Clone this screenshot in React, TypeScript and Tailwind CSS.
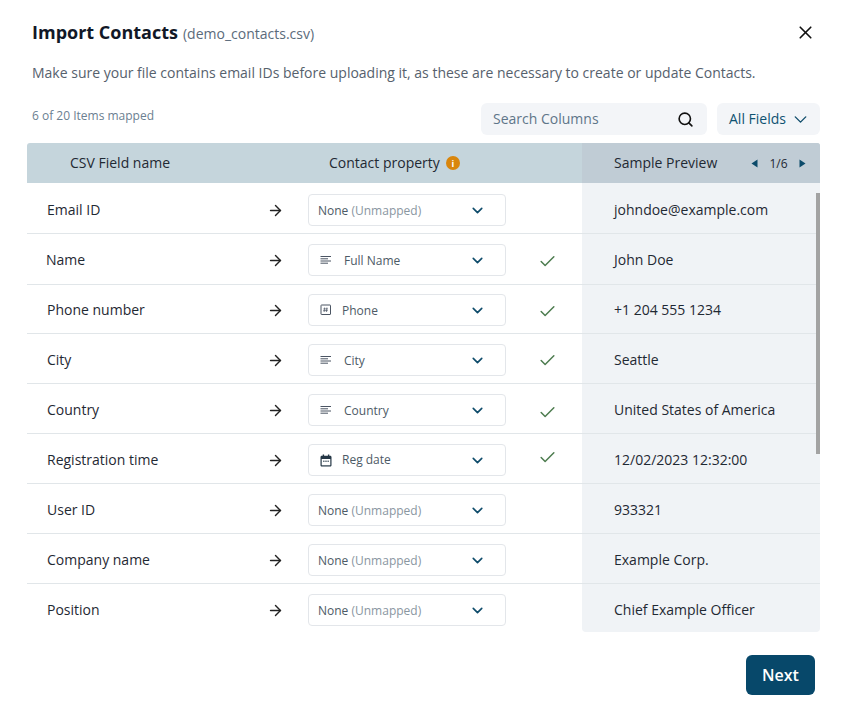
import React from "react";
import { ArrowRight, Check, ChevronDown, Search, X } from "lucide-react";

type Kind = "text" | "num" | "date" | null;
type Row = { name: string; prop: string | null; kind: Kind; sample: string; h: string; pt: string; nameClass?: string; checkClass?: string };

const rows: Row[] = [
  { name: "Email ID", prop: null, kind: null, sample: "johndoe@example.com", h: "h-[51px]", pt: "pt-[4px]" },
  { name: "Name", prop: "Full Name", kind: "text", sample: "John Doe", h: "h-[51px]", pt: "pt-[2px]", nameClass: "pl-[19px]", checkClass: "mt-[2px]" },
  { name: "Phone number", prop: "Phone", kind: "num", sample: "+1 204 555 1234", h: "h-[49px]", pt: "pt-[2px]", checkClass: "mt-[2px]" },
  { name: "City", prop: "City", kind: "text", sample: "Seattle", h: "h-[50px]", pt: "pt-[3px]" },
  { name: "Country", prop: "Country", kind: "text", sample: "United States of America", h: "h-[50px]", pt: "pt-[3px]", checkClass: "mt-[4px]" },
  { name: "Registration time", prop: "Reg date", kind: "date", sample: "12/02/2023 12:32:00", h: "h-[50px]", pt: "pt-[3px]", checkClass: "mt-[-5px]" },
  { name: "User ID", prop: null, kind: null, sample: "933321", h: "h-[50px]", pt: "pt-[3px]" },
  { name: "Company name", prop: null, kind: null, sample: "Example Corp.", h: "h-[50px]", pt: "pt-[3px]" },
  { name: "Position", prop: null, kind: null, sample: "Chief Example Officer", h: "h-[48px]", pt: "pt-[4px]" },
];

function TextIcon() {
  return (
    <svg width="12" height="12" viewBox="0 0 12 12" className="ml-[2px] mr-[12px] shrink-0" fill="none" stroke="#4b5563" strokeWidth="1">
      <path d="M0.5 2.5h10.5M0.5 4.8h7.5M0.5 7h10.5M0.5 9.2h7.5" />
    </svg>
  );
}

function NumIcon() {
  return (
    <svg width="12" height="12" viewBox="0 0 12 12" className="ml-[2px] mr-[10px] shrink-0" fill="none" stroke="#4b5563">
      <rect x="1" y="1" width="9.5" height="9.5" rx="0.5" strokeWidth="1" />
      <path d="M4.6 3.5 4.1 8M6.9 3.5 6.4 8M3.4 4.9h4.6M3.2 6.6h4.6" strokeWidth="0.7" />
    </svg>
  );
}

function DateIcon() {
  return (
    <svg width="12" height="13" viewBox="0 0 12 13" className="ml-[2px] mr-[10px] shrink-0">
      <path d="M2.7 0.5h1.4v1.2h3.8V0.5h1.4v1.2h0.9c.7 0 1.3.6 1.3 1.3v8.2c0 .7-.6 1.3-1.3 1.3H1.8c-.7 0-1.3-.6-1.3-1.3V3c0-.7.6-1.3 1.3-1.3h.9z" fill="#253746" />
      <rect x="1.7" y="5" width="8.6" height="6.3" fill="#ffffff" />
      <path d="M3 7.2h1.6M5.2 7.2h1.6M7.4 7.2H9" stroke="#253746" strokeWidth="1" />
    </svg>
  );
}

function Caret({ dir }: { dir: "l" | "r" }) {
  return (
    <svg width="7" height="9" viewBox="0 0 7 9" className="shrink-0">
      <path d={dir === "l" ? "M6.5 0.5v8L0.5 4.5z" : "M0.5 0.5v8L6.5 4.5z"} fill="#0b4a6a" />
    </svg>
  );
}

export default function App() {
  return (
    <div className="w-[847px] h-[720px] bg-white font-['Open_Sans',sans-serif] overflow-hidden pt-[20px]">
      <div className="flex items-center justify-between pl-[32px] pr-[31px] h-[26px]">
        <div className="flex items-baseline gap-[5px]">
          <span className="text-[18px] font-bold text-[#111827] leading-[26px]">Import Contacts</span>
          <span className="text-[14px] text-[#5b6b7b] leading-[26px]">(demo_contacts.csv)</span>
        </div>
        <X size={21} strokeWidth={1.9} className="text-[#111] mb-[2px]" />
      </div>
      <p className="pl-[32px] mt-[15px] text-[14px] leading-[24px] text-[#56616d]">
        Make sure your file contains email IDs before uploading it, as these are necessary to create or update Contacts.
      </p>
      <div className="flex items-center mt-[18px] pl-[32px] pr-[27px] h-[32px]">
        <span className="text-[12px] text-[#6b8091] mr-auto mt-[-7px]">6 of 20 Items mapped</span>
        <div className="w-[226px] h-[32px] rounded-[6px] bg-[#f3f5f8] flex items-center justify-between pl-[12px] pr-[13px]">
          <span className="text-[14px] text-[#5f7689] mb-[2px]">Search Columns</span>
          <Search size={17} strokeWidth={2.3} className="text-[#111]" />
        </div>
        <div className="w-[103px] h-[32px] ml-[10px] rounded-[6px] bg-[#f3f5f8] flex items-center pl-[12px] gap-[4px]">
          <span className="text-[14px] text-[#0f5272] mb-[2px]">All Fields</span>
          <ChevronDown size={21} strokeWidth={1.6} className="text-[#0f4c6b]" />
        </div>
      </div>
      <div className="relative ml-[27px] w-[793px] mt-[8px]">
        <div className="flex h-[40px] bg-[#c5d5dc] rounded-t-[3px] overflow-hidden text-[14px] text-[#1f2933]">
          <div className="w-[555px] flex items-center">
            <span className="ml-[43px] w-[259px] mb-[2px]">CSV Field name</span>
            <span className="mb-[2px]">Contact property</span>
            <span className="ml-[6px] w-[14px] h-[14px] rounded-full bg-[#d9860c] text-white text-[9px] font-bold flex items-center justify-center leading-none">i</span>
          </div>
          <div className="w-[238px] bg-[#c0ccd5] flex items-center pl-[32px]">
            <span className="w-[137px] mb-[2px]">Sample Preview</span>
            <Caret dir="l" />
            <span className="w-[41px] text-center text-[12px] mt-[2px]">1/6</span>
            <Caret dir="r" />
          </div>
        </div>
        <div>
          {rows.map((r, i) => {
            const last = i === rows.length - 1;
            return (
              <div key={r.name} className={`flex ${r.h}`}>
                <div className={`w-[555px] flex items-center ${r.pt} ${last ? "" : "border-b border-[#e1e6e9]"}`}>
                  <span className={`w-[241px] text-[14px] text-[#1f2933] mb-[2px] ${r.nameClass ?? "pl-[20px]"}`}>{r.name}</span>
                  <ArrowRight size={17} strokeWidth={2} className="text-[#222] shrink-0 ml-[-1px]" />
                  <div className="ml-[24px] w-[198px] h-[32px] shrink-0 rounded-[4px] border border-[#e3e6ea] bg-white flex items-center pl-[9px] pr-[19px] text-[12px] text-[#4d5a66]">
                    {r.kind === "text" && <TextIcon />}
                    {r.kind === "num" && <NumIcon />}
                    {r.kind === "date" && <DateIcon />}
                    {r.prop ? (
                      <span className={r.kind === "date" ? "" : "mt-[2px]"}>{r.prop}</span>
                    ) : (
                      <span className="mt-[2px]">
                        None <span className="text-[#8a96a1]">(Unmapped)</span>
                      </span>
                    )}
                    <ChevronDown size={17} strokeWidth={2.3} className="ml-auto text-[#0f4c6b]" />
                  </div>
                  {r.prop && <Check size={19} strokeWidth={1.9} className={`ml-[32px] text-[#4d7c4f] ${r.checkClass ?? ""}`} />}
                </div>
                <div className={`w-[238px] bg-[#f0f3f6] pl-[32px] flex items-center text-[14px] text-[#1f2933] ${r.pt} ${last ? "rounded-b-[4px]" : "border-b border-[#e1e6e9]"}`}>
                  <span className="mb-[2px]">{r.sample}</span>
                </div>
              </div>
            );
          })}
        </div>
        <div className="absolute right-0 top-[50px] w-[4px] h-[261px] bg-[#a3a3a3]" />
      </div>
      <div className="flex justify-end pr-[32px] mt-[23px]">
        <button className="w-[69px] h-[40px] rounded-[6px] bg-[#07486a] text-white text-[16px] font-semibold">Next</button>
      </div>
    </div>
  );
}
